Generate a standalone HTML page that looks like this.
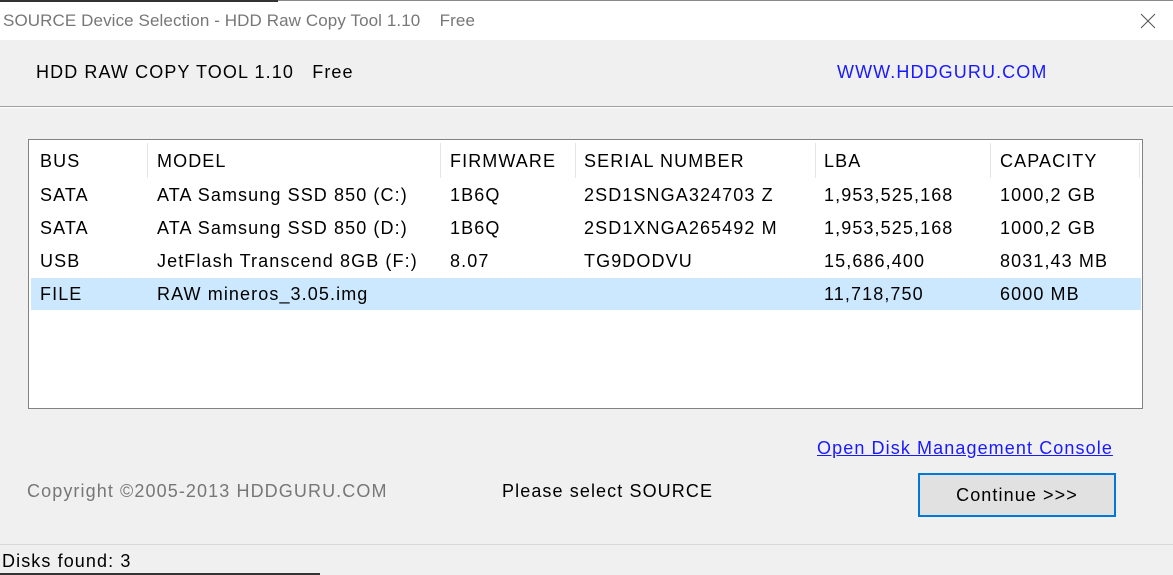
<!DOCTYPE html>
<html><head><style>
body{margin:0;width:1173px;height:575px;background:#f0f0f0;font-family:"Liberation Sans",sans-serif;position:relative;overflow:hidden;color:#000}
.a{position:absolute;white-space:nowrap}
.t{font-size:18px;letter-spacing:1.1px}
</style></head><body>
<div class="a" style="left:0;top:0;width:1173px;height:40px;background:#fff"></div>
<div class="a" style="left:0;top:0;width:278px;height:2px;background:#333"></div>
<div class="a" style="left:278px;top:0;width:895px;height:1px;background:#888"></div>
<div class="a" style="left:3px;top:11px;font-size:17px;color:#777;letter-spacing:0.1px">SOURCE Device Selection - HDD Raw Copy Tool 1.10 &nbsp;&nbsp; Free</div>
<svg class="a" style="left:1140px;top:13px" width="16" height="16"><path d="M1 1L15 15M15 1L1 15" stroke="#555" stroke-width="1"/></svg>
<div class="a t" style="left:36px;top:62px">HDD RAW COPY TOOL 1.10 &nbsp;&nbsp;Free</div>
<div class="a t" style="left:837px;top:62px;color:#1a1aff">WWW.HDDGURU.COM</div>
<div class="a" style="left:0;top:106px;width:1173px;height:1px;background:#a0a0a0"></div>
<div class="a" style="left:0;top:107px;width:1173px;height:1px;background:#fff"></div>
<div class="a" style="left:28px;top:139px;width:1113px;height:268px;background:#fff;border:1px solid #828282"></div>
<div class="a" style="left:31px;top:278px;width:1110px;height:32px;background:#cce8ff"></div>
<div class="a" style="left:147px;top:143px;width:1px;height:35px;background:#e5e5e5"></div>
<div class="a" style="left:440px;top:143px;width:1px;height:35px;background:#e5e5e5"></div>
<div class="a" style="left:575px;top:143px;width:1px;height:35px;background:#e5e5e5"></div>
<div class="a" style="left:815px;top:143px;width:1px;height:35px;background:#e5e5e5"></div>
<div class="a" style="left:990px;top:143px;width:1px;height:35px;background:#e5e5e5"></div>
<div class="a" style="left:1139px;top:143px;width:1px;height:35px;background:#e5e5e5"></div>
<div class="t">
<div class="a" style="left:40px;top:151px">BUS</div><div class="a" style="left:157px;top:151px">MODEL</div><div class="a" style="left:450px;top:151px">FIRMWARE</div><div class="a" style="left:584px;top:151px">SERIAL NUMBER</div><div class="a" style="left:824px;top:151px">LBA</div><div class="a" style="left:1000px;top:151px">CAPACITY</div>
<div class="a" style="left:40px;top:185px">SATA</div><div class="a" style="left:157px;top:185px">ATA Samsung SSD 850 (C:)</div><div class="a" style="left:450px;top:185px">1B6Q</div><div class="a" style="left:584px;top:185px">2SD1SNGA324703 Z</div><div class="a" style="left:824px;top:185px">1,953,525,168</div><div class="a" style="left:1000px;top:185px">1000,2 GB</div>
<div class="a" style="left:40px;top:218px">SATA</div><div class="a" style="left:157px;top:218px">ATA Samsung SSD 850 (D:)</div><div class="a" style="left:450px;top:218px">1B6Q</div><div class="a" style="left:584px;top:218px">2SD1XNGA265492 M</div><div class="a" style="left:824px;top:218px">1,953,525,168</div><div class="a" style="left:1000px;top:218px">1000,2 GB</div>
<div class="a" style="left:40px;top:251px">USB</div><div class="a" style="left:157px;top:251px">JetFlash Transcend 8GB (F:)</div><div class="a" style="left:450px;top:251px">8.07</div><div class="a" style="left:584px;top:251px">TG9DODVU</div><div class="a" style="left:824px;top:251px">15,686,400</div><div class="a" style="left:1000px;top:251px">8031,43 MB</div>
<div class="a" style="left:40px;top:284px">FILE</div><div class="a" style="left:157px;top:284px">RAW mineros_3.05.img</div><div class="a" style="left:824px;top:284px">11,718,750</div><div class="a" style="left:1000px;top:284px">6000 MB</div>
</div>
<div class="a t" style="left:817px;top:438px;color:#1a1aff;text-decoration:underline">Open Disk Management Console</div>
<div class="a t" style="left:27px;top:481px;color:#777">Copyright ©2005-2013 HDDGURU.COM</div>
<div class="a t" style="left:502px;top:481px">Please select SOURCE</div>
<div class="a t" style="left:918px;top:473px;width:194px;height:40px;border:2px solid #0078d7;background:#e1e1e1;text-align:center;line-height:40px">Continue &gt;&gt;&gt;</div>
<div class="a" style="left:0;top:544px;width:1173px;height:1px;background:#d8d8d8"></div>
<div class="a t" style="left:2px;top:551px">Disks found: 3</div>
<div class="a" style="left:0;top:573px;width:320px;height:2px;background:#333"></div>
</body></html>
